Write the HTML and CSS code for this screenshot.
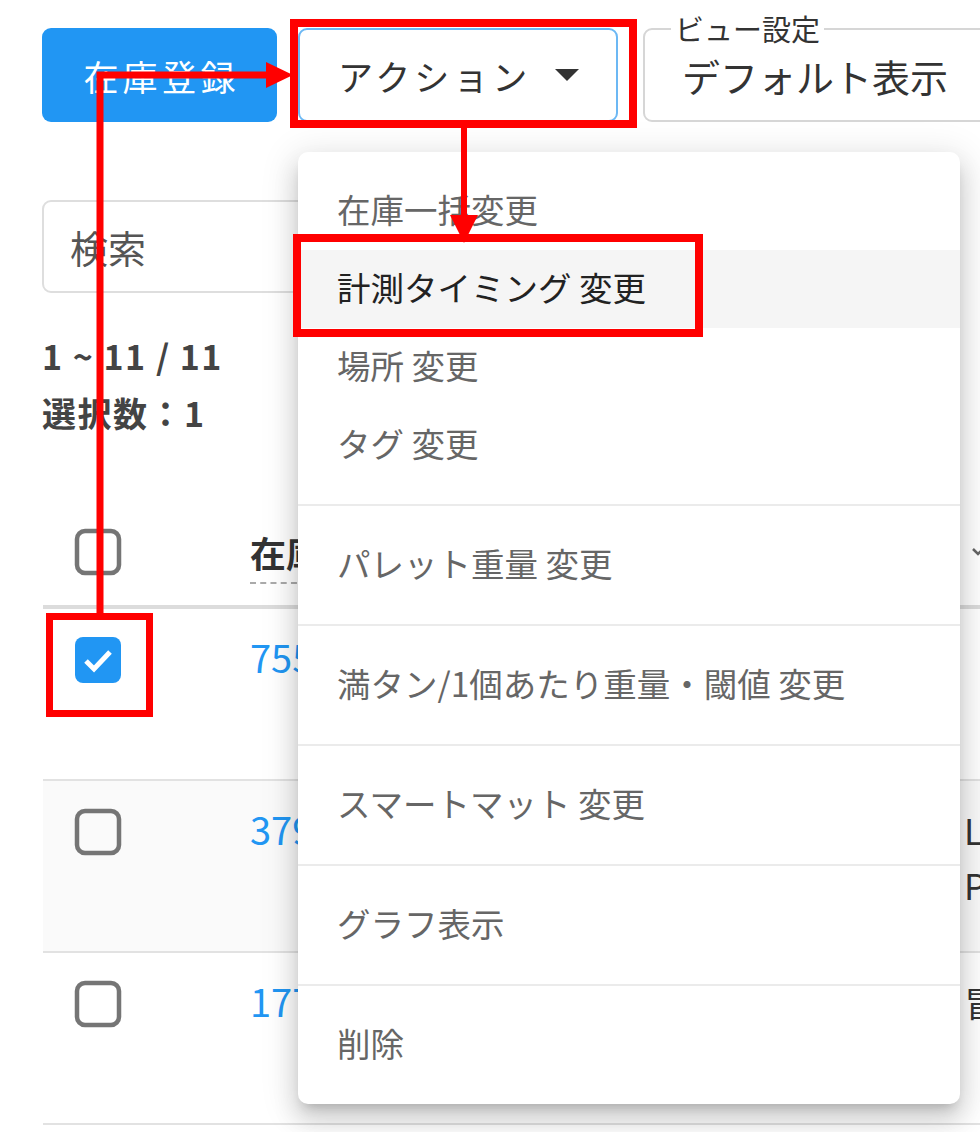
FILE: index.html
```html
<!DOCTYPE html>
<html lang="ja">
<head>
    <meta charset="UTF-8">
    <title>在庫一覧</title>
    <link rel="stylesheet" href="styles.css">
</head>
<body>
<div id="page">
    <div class="toolbar">
        <button class="btn btn-primary">在庫登録</button>
        <button class="btn btn-action">アクション<span class="caret"></span></button>
        <div class="view-field">
            <span class="view-label">ビュー設定</span>
            <span class="view-value">デフォルト表示</span>
        </div>
    </div>

    <div class="search">検索</div>

    <div class="counts">
        <p>1 ~ 11 / 11</p>
        <p>選択数：1</p>
    </div>

    <div class="table">
        <div class="tr thead">
            <div class="td check">
                <svg class="box" width="48" height="48" viewBox="0 0 48 48"><rect x="3" y="3" width="42" height="42" rx="8" fill="none" stroke="#757575" stroke-width="4.5"/></svg>
            </div>
            <div class="td code"><span class="th-title">在庫コード</span></div>
            <div class="td name">
                <svg class="sort" width="16" height="16" viewBox="0 0 16 16"><path d="M3 5l5 5 5-5" fill="none" stroke="#666" stroke-width="2.5"/></svg>
            </div>
        </div>
        <div class="tr">
            <div class="td check">
                <svg class="box" width="48" height="48" viewBox="0 0 48 48"><rect x="1" y="1" width="46" height="46" rx="8" fill="#2196f3"/><path d="M12 25l8 8 16-17" fill="none" stroke="#fff" stroke-width="5"/></svg>
            </div>
            <div class="td code"><a href="#">7553010</a></div>
            <div class="td name"></div>
        </div>
        <div class="tr striped">
            <div class="td check">
                <svg class="box" width="48" height="48" viewBox="0 0 48 48"><rect x="3" y="3" width="42" height="42" rx="8" fill="none" stroke="#757575" stroke-width="4.5"/></svg>
            </div>
            <div class="td code"><a href="#">3790214</a></div>
            <div class="td name"><p>Lot-A01</p><p>Pallet-2</p></div>
        </div>
        <div class="tr">
            <div class="td check">
                <svg class="box" width="48" height="48" viewBox="0 0 48 48"><rect x="3" y="3" width="42" height="42" rx="8" fill="none" stroke="#757575" stroke-width="4.5"/></svg>
            </div>
            <div class="td code"><a href="#">1771052</a></div>
            <div class="td name"><p>冒頭在庫</p></div>
        </div>
    </div>

    <div class="menu">
        <ul class="menu-group">
            <li class="menu-item">在庫一括変更</li>
            <li class="menu-item hover">計測タイミング 変更</li>
            <li class="menu-item">場所 変更</li>
            <li class="menu-item">タグ 変更</li>
        </ul>
        <ul class="menu-group">
            <li class="menu-item">パレット重量 変更</li>
        </ul>
        <ul class="menu-group">
            <li class="menu-item">満タン/1個あたり重量・閾値 変更</li>
        </ul>
        <ul class="menu-group">
            <li class="menu-item">スマートマット 変更</li>
        </ul>
        <ul class="menu-group">
            <li class="menu-item">グラフ表示</li>
        </ul>
        <ul class="menu-group">
            <li class="menu-item">削除</li>
        </ul>
    </div>

    <!-- 説明用の赤枠と矢印 -->
    <svg class="marks" width="980" height="1132" viewBox="0 0 980 1132">
        <g fill="none" stroke="#ff0000">
            <rect x="294" y="23" width="339" height="101" stroke-width="8"/>
            <rect x="49.5" y="616.5" width="100" height="97" stroke-width="7"/>
            <rect x="297" y="238" width="402" height="95" stroke-width="8"/>
            <polyline points="100,616 100,75 268,75" stroke-width="7"/>
            <line x1="464" y1="128" x2="464" y2="218" stroke-width="6"/>
        </g>
        <g fill="#ff0000">
            <polygon points="266,62 293,75 266,88"/>
            <polygon points="450,215 478,215 464,243"/>
        </g>
    </svg>
</div>
</body>
</html>
```

FILE: styles.css
```css
* {
    padding: 0;
    margin: 0;
    box-sizing: border-box;
    list-style: none;
}

body {
    font-family: "Noto Sans CJK JP", "Noto Sans", sans-serif;
    color: #333;
    background-color: #fff;
}

#page {
    position: relative;
    width: 980px;
    height: 1132px;
    overflow: hidden;
    padding: 28px 0 0 42px;
}

/* toolbar */
.toolbar {
    display: flex;
    height: 94px;
}

.btn {
    font-family: inherit;
    font-size: 35px;
    letter-spacing: 4px;
    border-radius: 9px;
}

.btn-primary {
    width: 235px;
    padding-left: 4px;
    border: none;
    color: #fff;
    background-color: #2196f3;
}

.btn-action {
    width: 320px;
    margin-left: 21px;
    display: flex;
    align-items: center;
    padding-left: 38px;
    color: #333;
    background-color: #fff;
    border: 2px solid #6cb8f4;
}

.caret {
    width: 0;
    height: 0;
    margin-left: 24px;
    border-left: 12px solid transparent;
    border-right: 12px solid transparent;
    border-top: 12px solid #333;
}

.view-field {
    position: relative;
    flex: 1;
    margin-left: 25px;
    margin-right: -40px;
    display: flex;
    align-items: center;
    padding-left: 37px;
    border: 2px solid #d6d6d6;
    border-radius: 9px;
}

.view-label {
    position: absolute;
    top: -19px;
    left: 26px;
    padding: 0 4px;
    font-size: 29px;
    line-height: 34px;
    background-color: #fff;
}

.view-value {
    font-size: 38px;
}

/* search & counts */
.search {
    width: 600px;
    height: 93px;
    margin-top: 78px;
    display: flex;
    align-items: center;
    padding-left: 26px;
    font-size: 38px;
    color: #555;
    border: 2px solid #dedede;
    border-radius: 9px;
}

.counts {
    margin-top: 34px;
    font-size: 34px;
    font-weight: bold;
    letter-spacing: 1.5px;
    line-height: 57px;
    color: #444;
}

/* table */
.table {
    width: 1300px;
    margin: 57px 0 0 1px;
}

.tr {
    display: flex;
    height: 172px;
    border-bottom: 2px solid #e2e2e2;
}

.tr .td {
    padding-top: 27px;
}

.thead {
    height: 111px;
    align-items: center;
    border-bottom: 4px solid #dcdcdc;
}

.thead .td {
    padding-top: 0;
}

.striped {
    background-color: #fafafa;
}

.td.check {
    width: 207px;
    padding-left: 31px;
}

.box {
    display: block;
}

.td.code {
    width: 713px;
}

.th-title {
    font-size: 36px;
    font-weight: bold;
    padding-bottom: 4px;
    border-bottom: 2px dashed #aaa;
}

.td.code a {
    font-size: 38px;
    line-height: 42px;
    color: #2196f3;
    text-decoration: none;
}

.td.name {
    flex: 1;
    padding-left: 1px;
    font-size: 35px;
    line-height: 55px;
    white-space: nowrap;
}

.tr .td.name {
    padding-top: 21px;
}

.thead .td.name {
    padding: 0 0 0 7px;
}

.sort {
    display: block;
}

/* dropdown menu */
.menu {
    position: absolute;
    left: 298px;
    top: 152px;
    width: 662px;
    z-index: 2;
    background-color: #fff;
    border-radius: 10px;
    box-shadow: 0 8px 12px -6px rgba(0, 0, 0, .2), 0 16px 24px 2px rgba(0, 0, 0, .12), 0 6px 34px 6px rgba(0, 0, 0, .1);
}

.menu-group {
    padding: 20px 0;
    border-top: 2px solid #ebebeb;
}

.menu-group:first-child {
    border-top: none;
}

.menu-item {
    height: 78px;
    display: flex;
    align-items: center;
    padding: 0 0 5px 39px;
    font-size: 33.5px;
    color: #666;
}

.menu-item.hover {
    color: #222;
    background-color: #f5f5f5;
}

.marks {
    position: absolute;
    top: 0;
    left: 0;
    z-index: 3;
    pointer-events: none;
}
```
